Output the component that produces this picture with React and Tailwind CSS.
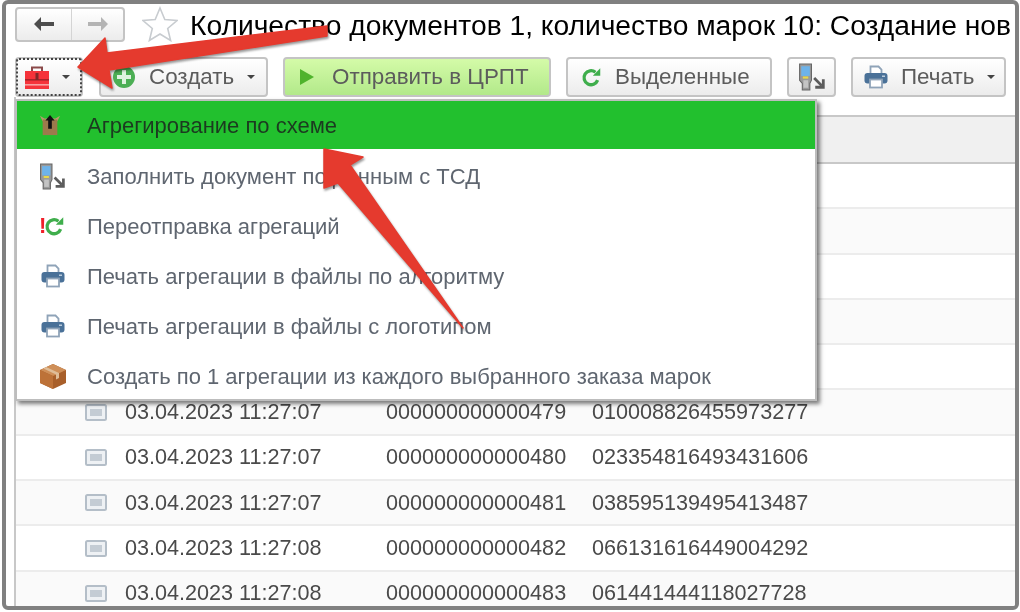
const btn = 'flex items-center h-[40px] shrink-0 rounded-[4px] border-2 border-[#c4c4c4] bg-gradient-to-b from-white to-[#ececec] text-[22.400px] text-[#5c5c5c]';

const ROWS = [
  { date: '', doc: '', code: '' },
  { date: '', doc: '', code: '' },
  { date: '', doc: '', code: '' },
  { date: '', doc: '', code: '' },
  { date: '', doc: '', code: '' },
  { date: '03.04.2023 11:27:07', doc: '000000000000479', code: '010008826455973277' },
  { date: '03.04.2023 11:27:07', doc: '000000000000480', code: '023354816493431606' },
  { date: '03.04.2023 11:27:07', doc: '000000000000481', code: '038595139495413487' },
  { date: '03.04.2023 11:27:08', doc: '000000000000482', code: '066131616449004292' },
  { date: '03.04.2023 11:27:08', doc: '000000000000483', code: '061441444118027728' },
];

function Caret() {
  return <span className="w-0 h-0 border-x-[4px] border-x-transparent border-t-[4px] border-t-[#444] shrink-0" />;
}

function PrinterIcon({ className }) {
  return (
    <svg viewBox="0 0 24 24" className={className}>
      <path d="M6.500 1.500h8l3 3V11h-11z" fill="#fff" stroke="#8fa3b8" strokeWidth="1.800" />
      <rect x="0.500" y="8" width="23" height="10.500" rx="3" fill="#4a7198" />
      <rect x="6" y="14.500" width="12" height="8" fill="#fff" stroke="#8fa3b8" strokeWidth="1.800" />
      <rect x="18" y="10.500" width="3" height="1.500" fill="#b9cbdc" />
    </svg>
  );
}

function TerminalIcon({ className }) {
  return (
    <svg viewBox="0 0 26 26" className={className}>
      <path d="M1.500 1h11v15l-1.500 3v6H4v-6l-2.500-3z" fill="#9a9a9a" stroke="#666" strokeWidth="1" />
      <rect x="3" y="3" width="8" height="9" fill="#6db3ea" />
      <rect x="4.500" y="12.500" width="5" height="2" fill="#e8d84a" />
      <rect x="5" y="16" width="4.500" height="7" fill="#c4c4c4" />
      <path d="M15 14l7 7M23.500 15v7.500H16" fill="none" stroke="#5c5c5c" strokeWidth="2.600" />
    </svg>
  );
}

function RefreshIcon({ className, color = '#3fae4c' }) {
  return (
    <svg viewBox="0 0 24 24" className={className}>
      <path d="M19 15a8 8 0 1 1-2.500-9" fill="none" stroke={color} strokeWidth="3.800" />
      <path d="M13.500 10h8.500V1.500z" fill={color} />
    </svg>
  );
}

function Toolbox() {
  return (
    <svg viewBox="0 0 26 26" className="w-[26px] h-[26px] shrink-0">
      <path d="M8 8V3.500h10V8" fill="none" stroke="#8a4a4a" strokeWidth="2" />
      <rect x="1" y="7" width="24" height="18" fill="#f5333a" />
      <rect x="1" y="15" width="24" height="1.600" fill="#a8252a" />
      <rect x="1" y="20" width="24" height="1.600" fill="#f7a0a0" />
      <rect x="11.500" y="9" width="3" height="7" fill="#7d2a2a" />
    </svg>
  );
}

function AggregateIcon() {
  return (
    <svg viewBox="0 0 24 24" className="w-[22px] h-[22px]">
      <path d="M1 2l5 3h12l5-3-3 6H4z" fill="#b89a6c" />
      <rect x="4" y="6" width="16" height="17" fill="#9c7a4c" />
      <path d="M12 1l5 6h-3v9h-4V7H7z" fill="#111" />
    </svg>
  );
}

function BoxIcon() {
  return (
    <svg viewBox="0 0 28 26" className="w-[28px] h-[26px]">
      <path d="M14 1L27 7v13l-13 6-13-6V7z" fill="#a85f2a" />
      <path d="M14 1L27 7l-13 6L1 7z" fill="#cf8f58" />
      <path d="M14 13v13L1 20V7z" fill="#bd7238" />
      <path d="M7 4l13 6v5l-3 1.500v-5L4.500 5.500z" fill="#dfbd98" />
    </svg>
  );
}

function RowIcon() {
  return (
    <svg viewBox="0 0 22 17" className="w-[22px] h-[17px] shrink-0">
      <rect x="1" y="1" width="20" height="15" rx="1.500" fill="#eef1f4" stroke="#b4bec8" strokeWidth="2" />
      <rect x="5" y="5" width="12" height="7" fill="#c4ccd4" />
    </svg>
  );
}

function MenuItem({ icon, children, active }) {
  return (
    <div className={`flex items-center text-[22px] ${active ? 'h-[48px] mb-[2px] bg-[#22c02e] text-[#1c3a20]' : 'h-[50px] text-[#5f6670]'}`}>
      <span className="w-[70px] pl-[22px] flex items-center shrink-0">{icon}</span>
      <span className="whitespace-nowrap">{children}</span>
    </div>
  );
}

export default function App() {
  return (
    <div className="relative w-[1020px] h-[612px] overflow-hidden bg-white font-['Liberation_Sans',Arial,sans-serif] blur-[0.5px]">
      <div className="ml-[2px] w-[1017px] h-[610px] border-4 border-[#808080] rounded-[6px] overflow-hidden flex flex-col">
        {/* заголовок */}
        <div className="flex items-center h-[38px] mt-[1px] pl-[9px] shrink-0 overflow-hidden">
          <div className="flex h-[35px] w-[110px] shrink-0 rounded-[4px] border-2 border-[#c4c4c4] bg-gradient-to-b from-white to-[#ececec]">
            <div className="w-[55px] flex items-center justify-center border-r border-[#d4d4d4] text-[#4d4d4d]">
              <svg viewBox="0 0 22 16" className="w-[22px] h-[16px]"><path d="M8 1L1 8l7 7V10h13V6H8z" fill="currentColor" /></svg>
            </div>
            <div className="flex-1 flex items-center justify-center text-[#b4b4b4]">
              <svg viewBox="0 0 22 16" className="w-[22px] h-[16px]"><path d="M14 1l7 7-7 7V10H1V6h13z" fill="currentColor" /></svg>
            </div>
          </div>
          <svg viewBox="0 0 36 36" className="w-[36px] h-[36px] ml-[17px] shrink-0">
            <path d="M18 2l4.800 11.500 12.200 1-9.300 8 2.900 12L18 28l-10.600 6.500 2.900-12-9.300-8 12.200-1z" fill="#fff" stroke="#c8ccd0" strokeWidth="1.600" />
          </svg>
          <div className="ml-[12px] pt-[2px] text-[28.200px] text-black whitespace-nowrap">Количество документов 1, количество марок 10: Создание нов</div>
        </div>

        {/* панель команд */}
        <div className="flex items-center gap-[15px] mt-[14px] pl-[9px] shrink-0">
          <div className={`${btn} w-[68px] mr-[1px] pl-[7px] gap-[12px] outline-dotted outline-2 -outline-offset-3 outline-[#444]`}>
            <Toolbox />
            <Caret />
          </div>
          <div className={`${btn} w-[169px] pl-[11px]`}>
            <svg viewBox="0 0 24 24" className="w-[24px] h-[24px] shrink-0">
              <circle cx="12" cy="12" r="11" fill="#4caf55" />
              <path d="M10 5h4v5h5v4h-5v5h-4v-5H5v-4h5z" fill="#dff3e0" />
            </svg>
            <span className="ml-[13px] mr-[13px]">Создать</span>
            <Caret />
          </div>
          <div className={`${btn} w-[268px] pl-[15px] !from-[#d4fba8] !to-[#b2e98a]`}>
            <span className="w-0 h-0 border-y-[8px] border-y-transparent border-l-[14px] border-l-[#4fb32c] shrink-0" />
            <span className="ml-[18px]">Отправить в ЦРПТ</span>
          </div>
          <div className={`${btn} w-[206px] pl-[13px]`}>
            <RefreshIcon className="w-[21px] h-[21px] shrink-0" />
            <span className="ml-[13px]">Выделенные</span>
          </div>
          <div className={`${btn} w-[49px] justify-center`}>
            <TerminalIcon className="w-[28px] h-[28px]" />
          </div>
          <div className={`${btn} w-[155px] pl-[11px]`}>
            <PrinterIcon className="w-[24px] h-[24px] shrink-0" />
            <span className="ml-[13px] mr-[13px]">Печать</span>
            <Caret />
          </div>
        </div>

        {/* таблица */}
        <div className="ml-[8px] flex-1 border-l-2 border-[#c8c8c8] flex flex-col overflow-hidden">
          <div className="h-[18px] shrink-0" />
          <div className="h-[49px] shrink-0 bg-[#f0f0f0] border-t-2 border-b-2 border-[#c8c8c8]" />
          {ROWS.map((row, i) => (
            <div key={i} className={`flex items-center h-[45.300px] shrink-0 border-b-2 border-[#ececec] text-[21.600px] text-[#4a4a4a] ${i % 2 ? 'bg-[#fafafa]' : 'bg-white'}`}>
              {row.date && (
                <>
                  <span className="ml-[69px]"><RowIcon /></span>
                  <span className="ml-[18px] w-[261px] whitespace-nowrap">{row.date}</span>
                  <span className="w-[206px] whitespace-nowrap">{row.doc}</span>
                  <span className="whitespace-nowrap">{row.code}</span>
                </>
              )}
            </div>
          ))}
        </div>
      </div>

      {/* выпадающее меню */}
      <div className="absolute left-[15px] top-[99px] w-[802px] h-[302px] bg-white border-2 border-[#bdbdbd] shadow-[3px_3px_4px_rgba(0,0,0,0.5)]">
        <MenuItem active icon={<AggregateIcon />}>Агрегирование по схеме</MenuItem>
        <MenuItem icon={<TerminalIcon className="w-[27px] h-[27px]" />}>Заполнить документ по данным с ТСД</MenuItem>
        <MenuItem icon={
          <span className="flex items-center text-[#f0202a] font-bold text-[22px] leading-none">!<RefreshIcon className="w-[21px] h-[21px] -ml-[2px]" /></span>
        }>Переотправка агрегаций</MenuItem>
        <MenuItem icon={<PrinterIcon className="w-[24px] h-[24px] ml-[2px]" />}>Печать агрегации в файлы по алгоритму</MenuItem>
        <MenuItem icon={<PrinterIcon className="w-[24px] h-[24px] ml-[2px]" />}>Печать агрегации в файлы с логотипом</MenuItem>
        <MenuItem icon={<BoxIcon />}>Создать по 1 агрегации из каждого выбранного заказа марок</MenuItem>
      </div>

      {/* стрелки поверх скриншота */}
      <svg viewBox="0 0 1020 612" className="absolute inset-0 w-[1020px] h-[612px] pointer-events-none">
        <g fill="#e53a2e" stroke="#e53a2e" strokeWidth="1.500" strokeLinejoin="round" className="drop-shadow-[1px_2px_1px_rgba(0,0,0,0.4)]">
          <path d="M78 67L105 38 107 53 327 26 327 36 109 70 112 88z" />
          <path d="M324 149L363 157 350 165 463 328 338 183 324 188z" />
        </g>
      </svg>
    </div>
  );
}
